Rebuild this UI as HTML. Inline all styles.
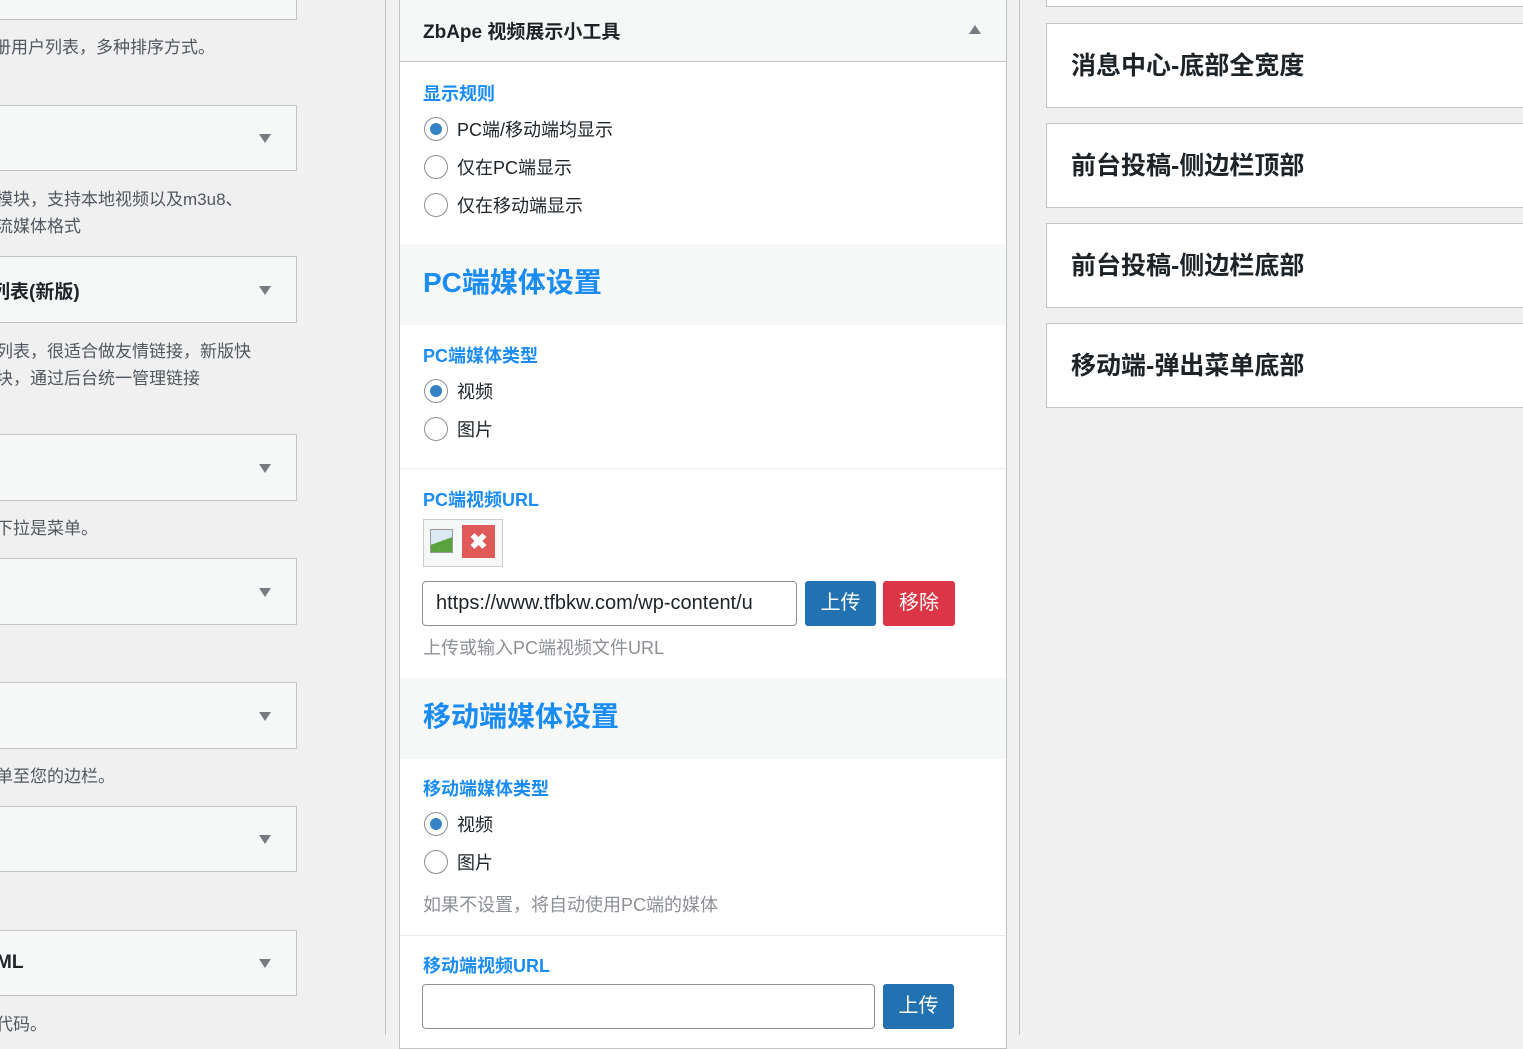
<!DOCTYPE html>
<html><head><meta charset="utf-8"><style>
*{box-sizing:border-box;margin:0;padding:0}
body{width:1523px;height:1035px;overflow:hidden;background:#f0f0f1;font-family:"Liberation Sans","Noto Sans CJK SC",sans-serif;color:#1d2327;position:relative}
.a{position:absolute}
.lb{position:absolute;left:-10px;width:307px;background:#f6f7f7;border:1px solid #c3c4c7}
.lb .tri{position:absolute;right:25px;top:50%;margin-top:-4px;width:0;height:0;border-left:6px solid transparent;border-right:6px solid transparent;border-top:9px solid #787c82}
.lt{position:absolute;left:-4px;font-size:17px;color:#50575e;line-height:27px}
.rb{position:absolute;left:1046px;width:490px;height:85px;background:#fff;border:1px solid #c3c4c7;font-size:25px;font-weight:bold;padding-left:24px;line-height:85px}
.sep{position:absolute;top:0;width:1px;height:1035px;background:#c3c4c7}
.panel{position:absolute;left:399px;top:-1px;width:608px;height:1050px;background:#fff;border:1px solid #c3c4c7}
.lab{position:absolute;left:23px;color:#1a8cf5;font-size:18px;font-weight:bold}
.r{position:absolute;left:24px;width:24px;height:24px;border:1px solid #8c8f94;border-radius:50%;background:#fff}
.r.on::after{content:"";position:absolute;left:5px;top:5px;width:12px;height:12px;border-radius:50%;background:#3582c4}
.rt{position:absolute;left:57px;font-size:18px;color:#1d2327}
.band{position:absolute;left:0;width:606px;height:81px;background:#f6f7f7}
.band div{position:absolute;left:23px;top:17px;font-size:28px;font-weight:bold;color:#1a8cf5}
.hint{position:absolute;left:23px;font-size:18px;color:#8c8f94}
.hr{position:absolute;left:0;width:606px;height:1px;background:#ececec}
.inp{position:absolute;left:22px;height:45px;border:1px solid #8c8f94;border-radius:4px;background:#fff;font-size:20px;padding-left:13px;line-height:43px;overflow:hidden;white-space:nowrap}
.btn{position:absolute;height:45px;border-radius:3px;color:#fff;font-size:20px;text-align:center;line-height:45px}
</style></head><body>
<div class="lb" style="top:-20px;height:40px"></div>
<div class="lt" style="top:34px;left:-6px">册用户列表，多种排序方式。</div>
<div class="lb" style="top:105px;height:66px"><span class="tri"></span></div>
<div class="lt" style="top:186px">模块，支持本地视频以及m3u8、<br>流媒体格式</div>
<div class="lb" style="top:256px;height:67px"><span style="position:absolute;left:0;top:20px;font-size:19px;font-weight:bold">列表(新版)</span><span class="tri"></span></div>
<div class="lt" style="top:338px">列表，很适合做友情链接，新版快<br>块，通过后台统一管理链接</div>
<div class="lb" style="top:434px;height:67px"><span class="tri"></span></div>
<div class="lt" style="top:515px">下拉是菜单。</div>
<div class="lb" style="top:558px;height:67px"><span class="tri"></span></div>
<div class="lb" style="top:682px;height:67px"><span class="tri"></span></div>
<div class="lt" style="top:763px">单至您的边栏。</div>
<div class="lb" style="top:806px;height:66px"><span class="tri"></span></div>
<div class="lb" style="top:930px;height:66px"><span style="position:absolute;left:5px;top:21px;font-size:19px;font-weight:bold">ML</span><span class="tri"></span></div>
<div class="lt" style="top:1011px">代码。</div>

<div class="sep" style="left:385px"></div>
<div class="sep" style="left:1019px"></div>

<div class="panel">
<div class="a" style="left:0;top:0;width:606px;height:62px;background:#f6f7f7;border-bottom:1px solid #c3c4c7"></div>
<div class="a" style="left:23px;top:17px;font-size:19px;font-weight:bold">ZbApe 视频展示小工具</div>
<div class="a" style="left:569px;top:25px;width:0;height:0;border-left:6px solid transparent;border-right:6px solid transparent;border-bottom:9px solid #787c82"></div>
<div class="lab" style="top:80px">显示规则</div>
<div class="r on" style="top:117px"></div><div class="rt" style="top:116px">PC端/移动端均显示</div>
<div class="r" style="top:155px"></div><div class="rt" style="top:154px">仅在PC端显示</div>
<div class="r" style="top:193px"></div><div class="rt" style="top:192px">仅在移动端显示</div>
<div class="band" style="top:244px"><div>PC端媒体设置</div></div>
<div class="lab" style="top:342px">PC端媒体类型</div>
<div class="r on" style="top:379px"></div><div class="rt" style="top:378px">视频</div>
<div class="r" style="top:417px"></div><div class="rt" style="top:416px">图片</div>
<div class="hr" style="top:468px"></div>
<div class="lab" style="top:486px">PC端视频URL</div>
<div class="a" style="left:23px;top:519px;width:80px;height:48px;border:1px solid #ccc;background:#f6f7f7"></div>
<div class="a" style="left:30px;top:529px;width:23px;height:24px;background:linear-gradient(160deg,#dce8f4 50%,#5aa33c 50%);border:1px solid #999"></div>
<div class="a" style="left:62px;top:525px;width:33px;height:33px;background:#e05a5a;color:#fff;font-weight:bold;font-size:22px;text-align:center;line-height:33px">✖</div>
<div class="inp" style="top:581px;width:375px">https://www.tfbkw.com/wp-content/u</div>
<div class="btn" style="left:405px;top:581px;width:71px;background:#2271b1">上传</div>
<div class="btn" style="left:483px;top:581px;width:72px;background:#dc3545">移除</div>
<div class="hint" style="top:634px">上传或输入PC端视频文件URL</div>
<div class="band" style="top:678px"><div>移动端媒体设置</div></div>
<div class="lab" style="top:775px">移动端媒体类型</div>
<div class="r on" style="top:812px"></div><div class="rt" style="top:811px">视频</div>
<div class="r" style="top:850px"></div><div class="rt" style="top:849px">图片</div>
<div class="hint" style="top:891px">如果不设置，将自动使用PC端的媒体</div>
<div class="hr" style="top:935px"></div>
<div class="lab" style="top:952px">移动端视频URL</div>
<div class="inp" style="top:984px;width:453px"></div>
<div class="btn" style="left:483px;top:984px;width:71px;background:#2271b1">上传</div>
</div>

<div class="rb" style="top:-78px"></div>
<div class="rb" style="top:23px">消息中心-底部全宽度</div>
<div class="rb" style="top:123px">前台投稿-侧边栏顶部</div>
<div class="rb" style="top:223px">前台投稿-侧边栏底部</div>
<div class="rb" style="top:323px">移动端-弹出菜单底部</div>
</body></html>
